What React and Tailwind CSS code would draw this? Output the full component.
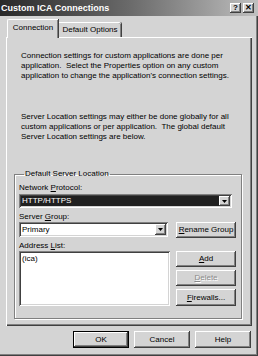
const raised =
  "bg-[#d4d4d4] shadow-[inset_-1px_-1px_0_#404040,inset_1px_1px_0_#ffffff,inset_-2px_-2px_0_#808080]";
const sunken =
  "shadow-[inset_1px_1px_0_#808080,inset_-1px_-1px_0_#ffffff,inset_2px_2px_0_#404040,inset_-2px_-2px_0_#d4d4d4]";

function Btn({ children, className = "", disabled = false }) {
  return (
    <div
      className={`flex items-center justify-center ${raised} ${
        disabled ? "text-[#8a8a8a] [text-shadow:1px_1px_0_#ffffff]" : "text-black"
      } ${className}`}
    >
      {children}
    </div>
  );
}

function Arrow() {
  return (
    <div className={`flex h-full w-[11px] shrink-0 items-center justify-center ${raised}`}>
      <svg width="5" height="3" viewBox="0 0 5 3">
        <path d="M0 0h5L2.5 3z" fill="#000" />
      </svg>
    </div>
  );
}

function Combo({ value, selected, className = "" }) {
  return (
    <div className={`flex bg-white p-[2px] ${sunken} ${className}`}>
      <div
        className={`flex flex-1 items-center pl-[1px] ${
          selected ? "bg-[#202020] text-white" : "text-black"
        }`}
      >
        {value}
      </div>
      <Arrow />
    </div>
  );
}

export default function App() {
  return (
    <div className="flex h-[356px] w-[258px] flex-col overflow-hidden bg-[#d4d4d4] font-['Liberation_Sans',Arial,sans-serif] text-[8px] leading-[10px] text-black shadow-[inset_-1px_-1px_0_#404040,inset_-2px_-2px_0_#808080]">
      {/* title bar */}
      <div className="flex h-[16px] shrink-0 items-center justify-between bg-gradient-to-r from-[#2a2a2a] via-[#6a6a6a] to-[#c0c0c0] pl-[1px] pr-[4px]">
        <span className="text-[9px] font-bold text-white">Custom ICA Connections</span>
        <div className="flex gap-[2px]">
          <div className={`flex h-[10px] w-[11px] items-center justify-center text-[8px] font-bold leading-none ${raised}`}>
            ?
          </div>
          <div className={`flex h-[10px] w-[11px] items-center justify-center text-[8px] font-bold leading-none ${raised}`}>
            ✕
          </div>
        </div>
      </div>

      {/* tabs */}
      <div className="mt-[3px] flex h-[18px] shrink-0 items-end pl-[7px]">
        <div className="relative z-10 -mb-px flex h-[19px] w-[51px] items-center justify-center rounded-tl-[2px] border-l border-t border-white bg-[#d4d4d4] pb-[2px] shadow-[inset_-1px_0_0_#808080,1px_0_0_#404040]">
          Connection
        </div>
        <div className="ml-[1px] flex h-[15px] w-[62px] items-center justify-center rounded-tr-[2px] border-t border-white shadow-[inset_-1px_0_0_#808080,1px_0_0_#404040]">
          Default Options
        </div>
      </div>

      {/* panel */}
      <div className="ml-[6px] flex h-[289px] w-[246px] shrink-0 flex-col border-l border-t border-white shadow-[inset_-1px_-1px_0_#404040,inset_-2px_-2px_0_#808080]">
        <p className="ml-[14px] mt-[13px] w-[215px]">
          Connection settings for custom applications are done per application.&nbsp; Select the
          Properties option on any custom application to change the application's connection
          settings.
        </p>
        <p className="ml-[14px] mt-[31px] w-[215px]">
          Server Location settings may either be done globally for all custom applications or per
          application.&nbsp; The global default Server Location settings are below.
        </p>

        <fieldset className="ml-[7px] mt-[27px] w-[228px] border border-[#808080] pb-[12px] pl-[4px] shadow-[inset_1px_1px_0_#ffffff,1px_1px_0_#ffffff]">
          <legend className="ml-[5px] px-[1px]">Default Server Location</legend>
          <div className="mt-[4px]">
            Network <u>P</u>rotocol:
          </div>
          <Combo value="HTTP/HTTPS" selected className="mt-[1px] h-[14px] w-[213px]" />

          <div className="mt-[4px]">
            Server <u>G</u>roup:
          </div>
          <div className="flex items-start gap-[8px]">
            <Combo value="Primary" className="h-[15px] w-[149px]" />
            <Btn className="h-[16px] w-[60px]">
              <u>R</u>ename Group
            </Btn>
          </div>

          <div className="flex gap-[6px]">
            <div className="flex flex-col">
              <div className="mt-[3px]">
                Address <u>L</u>ist:
              </div>
              <div className={`h-[55px] w-[151px] bg-white px-[3px] pt-[3px] ${sunken}`}>(ica)</div>
            </div>
            <div className="flex flex-col gap-[3px] pt-[13px]">
              <Btn className="h-[16px] w-[60px]">
                <u>A</u>dd
              </Btn>
              <Btn disabled className="h-[16px] w-[60px]">
                <u>D</u>elete
              </Btn>
              <Btn className="h-[17px] w-[60px]">
                <u>F</u>irewalls...
              </Btn>
            </div>
          </div>
        </fieldset>
      </div>

      {/* dialog buttons */}
      <div className="mt-[5px] flex justify-end gap-[5px] pr-[7px]">
        <div className="border border-black">
          <Btn className="h-[15px] w-[54px]">OK</Btn>
        </div>
        <Btn className="h-[17px] w-[56px]">Cancel</Btn>
        <Btn className="h-[17px] w-[56px]">Help</Btn>
      </div>
    </div>
  );
}
